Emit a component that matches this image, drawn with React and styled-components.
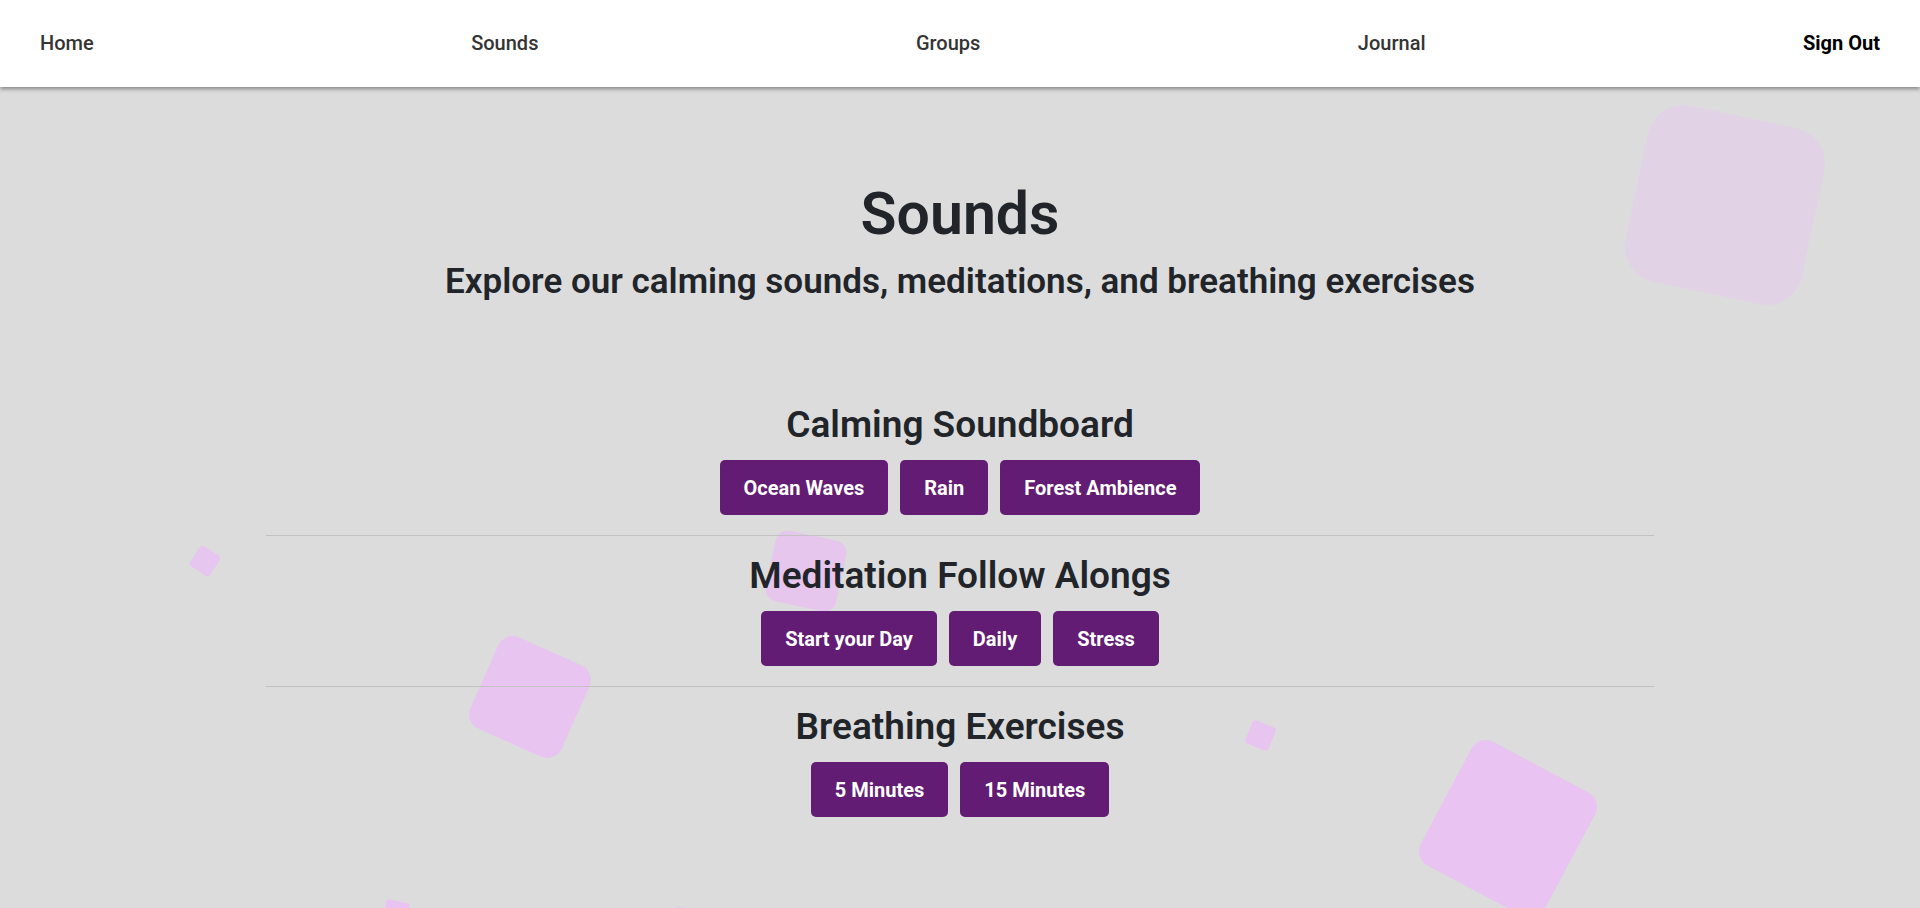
import React from "react";
import styled, { createGlobalStyle } from "styled-components";

const GlobalStyle = createGlobalStyle`
  html, body { margin: 0; padding: 0; }
  body {
    font-family: Roboto, "Noto Sans", sans-serif;
    background: #dcdcdc;
    color: #212529;
  }
  * { box-sizing: border-box; }
`;

const Page = styled.div`
  position: relative;
  min-height: 100vh;
  height: 908px;
  overflow: hidden;
  background: #dcdcdc;
`;

const NavBar = styled.nav`
  position: relative;
  z-index: 3;
  height: 87px;
  padding: 0 40px 2px;
  display: flex;
  align-items: center;
  justify-content: space-between;
  background: #ffffff;
  box-shadow: 0 2px 4px rgba(0, 0, 0, 0.4);
`;

const NavLink = styled.a`
  font-size: 20px;
  font-weight: ${(p) => (p.$strong ? 700 : 500)};
  color: ${(p) => (p.$strong ? "#000000" : "#343434")};
  text-decoration: none;
  line-height: 24px;
  cursor: pointer;
`;

const Shape = styled.div`
  position: absolute;
  z-index: 0;
  border-radius: ${(p) => p.$r}px;
  background: ${(p) => p.$color};
  pointer-events: none;
`;

const Main = styled.main`
  position: relative;
  z-index: 1;
  display: flex;
  flex-direction: column;
  align-items: center;
  padding-top: 92px;
`;

const Title = styled.h1`
  margin: 0;
  font-size: 59px;
  line-height: 70px;
  font-weight: 600;
  text-align: center;
`;

const Subtitle = styled.h2`
  margin: 12px 0 0;
  font-size: 35px;
  line-height: 42px;
  font-weight: 600;
  text-align: center;
`;

const Container = styled.div`
  width: 1388px;
  margin-top: 100px;
  display: flex;
  flex-direction: column;
  align-items: center;
`;

const Section = styled.section`
  width: 100%;
  display: flex;
  flex-direction: column;
  align-items: center;
`;

const SectionTitle = styled.h3`
  margin: 0 0 13px;
  font-size: 37px;
  line-height: 44px;
  font-weight: 600;
  text-align: center;
`;

const ButtonRow = styled.div`
  display: flex;
  justify-content: center;
  gap: 12px;
`;

const SoundButton = styled.button`
  height: 55px;
  padding: 0 24px;
  border: none;
  border-radius: 5px;
  background: #621c74;
  color: #ffffff;
  font-family: Roboto, "Noto Sans", sans-serif;
  font-size: 20px;
  font-weight: 700;
  cursor: pointer;
`;

const Divider = styled.hr`
  width: 100%;
  margin: 20px 0 18px;
  border: none;
  border-top: 1px solid #c2c2c2;
  height: 0;
`;

const shapes = [
  { cx: 1725, cy: 205, s: 180, r: 36, rot: 12, color: "#e2d2e6" },
  { cx: 806, cy: 571, s: 72, r: 12, rot: 12, color: "#e7c6ee" },
  { cx: 205, cy: 561, s: 24, r: 4, rot: 33, color: "#e6c6ee" },
  { cx: 530, cy: 697, s: 100, r: 16, rot: 24, color: "#e8c4f0" },
  { cx: 1260, cy: 735, s: 25, r: 4, rot: 22, color: "#e8c4f0" },
  { cx: 1508, cy: 829, s: 140, r: 16, rot: 28, color: "#e9c3f2" },
  { cx: 396, cy: 913, s: 24, r: 3, rot: 13, color: "#e9c3f2" },
  { cx: 687, cy: 921, s: 26, r: 3, rot: 4, color: "#e9c3f2" },
];

const sections = [
  { title: "Calming Soundboard", items: ["Ocean Waves", "Rain", "Forest Ambience"] },
  { title: "Meditation Follow Alongs", items: ["Start your Day", "Daily", "Stress"] },
  { title: "Breathing Exercises", items: ["5 Minutes", "15 Minutes"] },
];

export default function App() {
  return (
    <>
      <GlobalStyle />
      <Page>
        <NavBar>
          <NavLink>Home</NavLink>
          <NavLink>Sounds</NavLink>
          <NavLink>Groups</NavLink>
          <NavLink>Journal</NavLink>
          <NavLink $strong>Sign Out</NavLink>
        </NavBar>
        {shapes.map((sh, i) => (
          <Shape
            key={i}
            $r={sh.r}
            $color={sh.color}
            style={{
              left: sh.cx - sh.s / 2,
              top: sh.cy - sh.s / 2,
              width: sh.s,
              height: sh.s,
              transform: `rotate(${sh.rot}deg)`,
            }}
          />
        ))}
        <Main>
          <Title>Sounds</Title>
          <Subtitle>Explore our calming sounds, meditations, and breathing exercises</Subtitle>
          <Container>
            {sections.map((sec, i) => (
              <Section key={sec.title}>
                <SectionTitle>{sec.title}</SectionTitle>
                <ButtonRow>
                  {sec.items.map((it) => (
                    <SoundButton key={it}>{it}</SoundButton>
                  ))}
                </ButtonRow>
                {i < sections.length - 1 && <Divider />}
              </Section>
            ))}
          </Container>
        </Main>
      </Page>
    </>
  );
}
